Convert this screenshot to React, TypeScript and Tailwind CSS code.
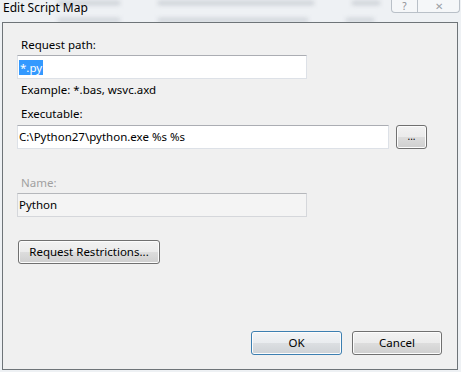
import React from "react";

const font = { fontFamily: '"Segoe UI", "Noto Sans", "Open Sans", sans-serif' };

function TextBox({ children, disabled }: { children: React.ReactNode; disabled?: boolean }) {
  return (
    <div
      className={
        "h-[24px] border flex items-center px-[1px] text-[11.5px] " +
        (disabled
          ? "bg-[#f4f4f4] border-[#d5d7db] border-t-[#b5b7bb]"
          : "bg-white border-[#dde1e7] border-t-[#abadb3]")
      }
    >
      {children}
    </div>
  );
}

function Button({ children, width, focused }: { children: React.ReactNode; width: string; focused?: boolean }) {
  return (
    <button
      className={
        "h-[24px] rounded-[3px] border text-[11.5px] text-black flex items-center justify-center shadow-[inset_0_0_0_1px_#fcfcfc] " +
        width +
        (focused
          ? " border-[#3c7fb1] bg-[linear-gradient(#f2f4f6,#e9ecef_50%,#dcdfe2_50%,#ced2d6)]"
          : " border-[#707070] bg-[linear-gradient(#f2f2f2,#ebebeb_50%,#dddddd_50%,#cfcfcf)]")
      }
    >
      {children}
    </button>
  );
}

export default function App() {
  return (
    <div className="w-[461px] h-[372px] bg-[#eef1f4] relative overflow-hidden text-black" style={font}>
      {/* blurred glass behind the caption: smudges of the window underneath */}
      <div className="absolute inset-x-0 top-0 h-[24px] blur-[2px] pointer-events-none">
        <div className="flex items-center gap-[38px] pl-[58px] h-[6px]">
          <div className="w-[62px] h-[4px] bg-[#c9ced4]" />
          <div className="w-[156px] h-[4px] bg-[#c9ced4]" />
          <div className="w-[28px] h-[4px] bg-[#c9ced4]" />
        </div>
        <div className="flex items-center gap-[38px] pl-[58px] mt-[11px] h-[6px]">
          <div className="w-[62px] h-[4px] bg-[#cdd2d8]" />
          <div className="w-[150px] h-[4px] bg-[#cdd2d8]" />
          <div className="w-[28px] h-[4px] bg-[#cdd2d8]" />
        </div>
      </div>

      <div className="relative h-[22px] flex items-start justify-between">
        <div className="pl-[3px] text-[12px] leading-[16px] text-black">Edit Script Map</div>
        <div className="flex mr-[1px]">
          <div className="w-[27px] h-[13px] border border-t-0 border-[#b9c0c8] rounded-bl-[4px] flex items-center justify-center text-[10px] leading-[12px] text-[#8a8f95] bg-[#f5f7f9]">
            ?
          </div>
          <div className="w-[42px] h-[13px] border border-l-0 border-t-0 border-[#b9c0c8] rounded-br-[4px] flex items-center justify-center text-[10px] leading-[12px] text-[#9aa0a6] bg-[#f5f7f9]">
            ✕
          </div>
        </div>
      </div>

      <div className="relative ml-[2px] w-[456px] h-[348px] border border-[#6e7478] bg-[#f0f0f0] flex flex-col pl-[14px] pr-[15px] pt-[14px] pb-[14px] text-[11.5px]">
        <div className="leading-[16px] pl-[4px]">Request path:</div>
        <div className="w-[290px] mt-[2px]">
          <TextBox>
            <span className="bg-[#3399ff] text-white px-[1px] leading-[15px]">*.py</span>
          </TextBox>
        </div>
        <div className="leading-[16px] pl-[4px] mt-[3px]">Example: *.bas, wsvc.axd</div>

        <div className="leading-[16px] pl-[4px] mt-[8px]">Executable:</div>
        <div className="flex items-center gap-[7px] mt-[3px]">
          <div className="w-[372px]">
            <TextBox>
              <span>C:\Python27\python.exe %s %s</span>
            </TextBox>
          </div>
          <Button width="w-[31px]">
            <span className="text-[10px] leading-none -mt-[2px]">...</span>
          </Button>
        </div>

        <div className="leading-[16px] pl-[4px] mt-[26px] text-[#a0a0a0]">Name:</div>
        <div className="w-[290px] mt-[2px]">
          <TextBox disabled>
            <span>Python</span>
          </TextBox>
        </div>

        <div className="mt-[23px] pl-[1px]">
          <Button width="w-[142px]">Request Restrictions...</Button>
        </div>

        <div className="mt-auto flex justify-end gap-[10px]">
          <Button width="w-[91px]" focused>
            OK
          </Button>
          <Button width="w-[90px]">Cancel</Button>
        </div>
      </div>
    </div>
  );
}
